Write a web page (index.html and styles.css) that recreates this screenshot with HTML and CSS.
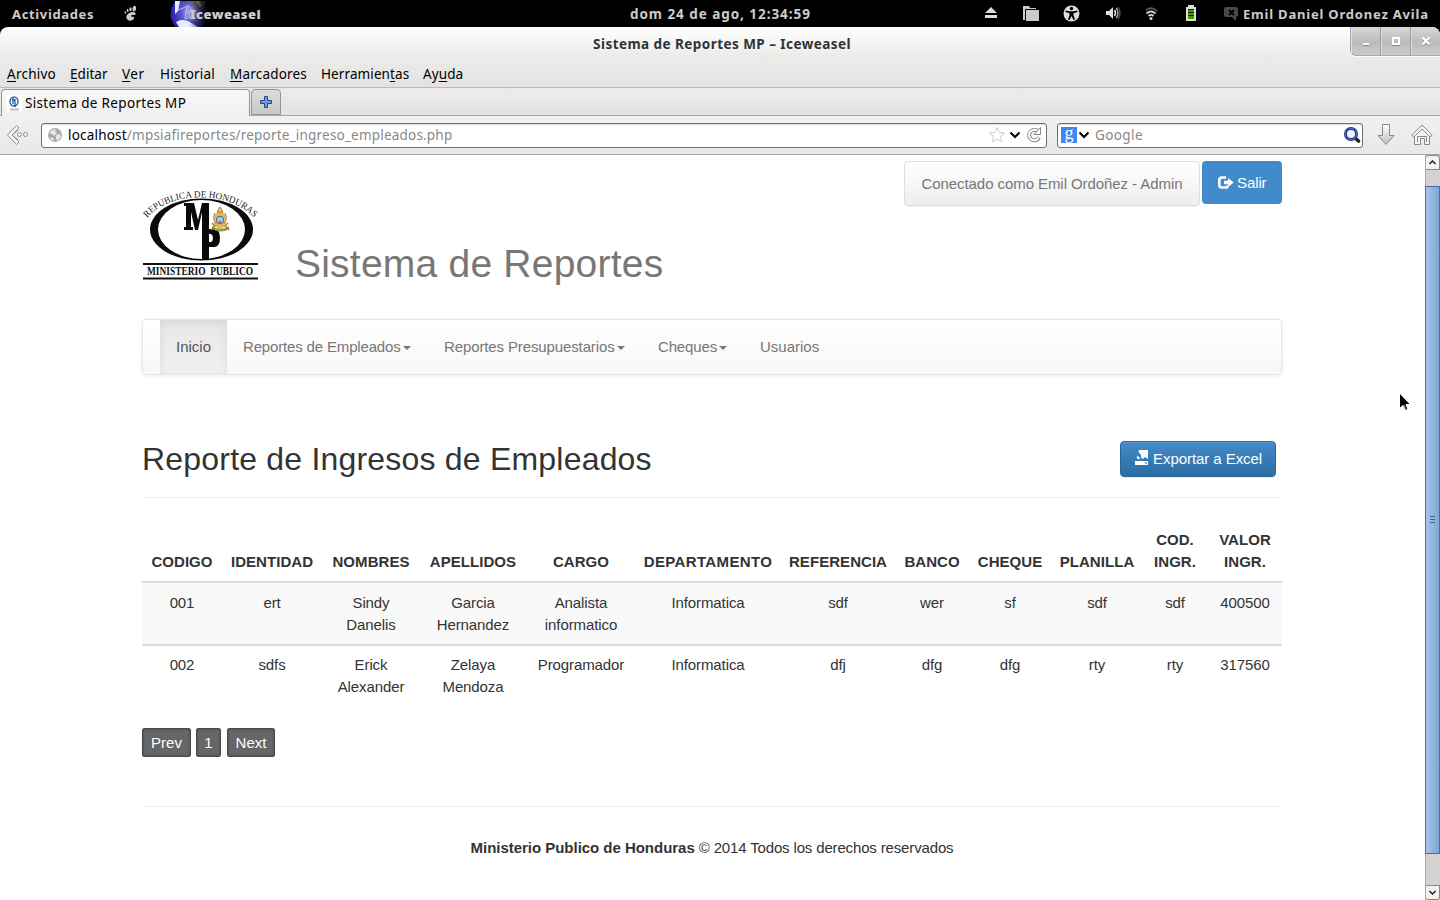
FILE: index.html
```html
<!DOCTYPE html>
<html lang="es">
<head>
<meta charset="utf-8">
<title>Sistema de Reportes MP</title>
<link rel="stylesheet" href="styles.css">
</head>
<body>
<header class="topbar">
  <span class="activities">Actividades</span>
  <svg class="foot" width="16" height="18" viewBox="0 0 16 18" fill="#ccc"><path d="M8.500 7.500c3-1 6 0 5 2-.8 1-3-.2-4.300 1-.8 1 .8 1.500 1.800 1.300 1.300.2 1.500 1.700.3 2.700-2 1.800-5.300 1.500-6.500-.8C3.500 11 5.500 8.500 8.500 7.500z"/><ellipse cx="12.300" cy="3.700" rx="1.800" ry="2.900" transform="rotate(15 12.300 3.700)"/><ellipse cx="8.500" cy="4.200" rx="1.100" ry="2"/><ellipse cx="5.600" cy="5.500" rx=".9" ry="1.600" transform="rotate(-15 5.600 5.500)"/><ellipse cx="3.400" cy="7.500" rx=".8" ry="1.300" transform="rotate(-25 3.400 7.500)"/></svg>
  <span class="app"><svg class="globe" width="38" height="26" viewBox="0 0 38 26"><defs><radialGradient id="gl" cx=".55" cy=".45" r=".6"><stop offset="0" stop-color="#b9bcf5"/><stop offset=".45" stop-color="#5c55cc"/><stop offset="1" stop-color="#1b14a8"/></radialGradient><linearGradient id="fade"><stop offset=".5" stop-color="#000" stop-opacity="0"/><stop offset="1" stop-color="#000"/></linearGradient></defs><circle cx="19" cy="13" r="18.500" fill="url(#gl)"/><path d="M5 0h5L8 10l-3 3zM6 21c8-5 14 0 22 5H9z" fill="#e4ecff"/><path d="M8 9l10-4 12 10M17 5l-2 13 11-5" stroke="#c8ccff" fill="none" stroke-width=".8"/><path d="M20 0h16c0 4-3 6-7 6s-7-2-9-6z" fill="#777"/><path d="M27 0l4 5" stroke="#ccc" stroke-width="2"/><path d="M0 0h38v26H0z" fill="url(#fade)"/></svg><b>Iceweasel</b></span>
  <span class="clock">dom 24 de ago, 12:34:59</span>
  <div class="tray">
    <svg width="16" height="18" viewBox="0 0 16 18" fill="#ddd"><path d="M9 2l6 6H3zM3 10h12v3H3z"/></svg>
    <svg width="18" height="18" viewBox="0 0 18 18"><path d="M1 1h6l1 2h6v3H5v9H1z" fill="#ccc"/><path d="M4 5h13v11H4z" fill="#ccc"/><path d="M3.500 15V4.500h11" stroke="#000" fill="none"/></svg>
    <svg width="18" height="18" viewBox="0 0 18 18"><circle cx="8.500" cy="8.500" r="8" fill="#ddd"/><g transform="translate(-.5 -.5)"><circle cx="9" cy="4" r="1.700"/><path d="M3 6l4 .7h4L15 6v1.500l-4 1.200v2L12.500 15l-1.500.6L9 11.500 7 15.600 5.500 15 7 10.700v-2L3 7.500z"/></g></svg>
    <svg width="18" height="18" viewBox="4 1 18 18" fill="none"><path d="M2 7h3l4-4v12l-4-4H2z" fill="#ddd" transform="translate(3 0)"/><g transform="translate(3 0)"><path d="M10.500 6q2 3 0 6" stroke="#ddd" stroke-width="1.500"/><path d="M12.300 4q3.200 5 0 10" stroke="#aaa" stroke-width="1.400"/><path d="M14.200 3q3.500 6 0 12" stroke="#555" stroke-width="1.400"/></g></svg>
    <svg width="16" height="18" viewBox="3 1 16 18" fill="none" stroke-width="1.700"><path d="M2 7q6-5.500 12 0" stroke="#555"/><path d="M3.500 9.500q4.500-4 9 0" stroke="#ccc"/><path d="M5.500 12q2.500-2.200 5 0" stroke="#ddd"/><circle cx="8" cy="14.500" r="1.500" fill="#ddd"/></svg>
    <svg width="14" height="18" viewBox="2 1 14 18"><path d="M4 1h6v2h2v14H2V3h2z" fill="#ddd"/><path d="M4 5h6v10H4z" fill="#222"/><path d="M4 6h6v2H4zM4 9h6v2H4zM4 12h6v3H4z" fill="#4e9a06"/></svg>
    <svg width="16" height="18" viewBox="0 0 16 18"><path d="M3 2h10q2 0 2 2v6q0 2-2 2v4l-4-4H3q-2 0-2-2V4q0-2 2-2z" fill="#4a4a4a"/><path d="M6 5l5 5M11 5l-5 5" stroke="#000" stroke-width="2"/></svg>
  </div>
  <span class="user">Emil Daniel Ordonez Avila</span>
</header>

<div class="window">
  <div class="titlebar">
    <span class="wintitle">Sistema de Reportes MP – Iceweasel</span>
    <div class="winbtns">
      <span><svg width="10" height="10"><path d="M2 9.500h6" stroke="#888"/><path d="M2 8h6" stroke="#fff" stroke-width="2"/></svg></span>
      <span><svg width="10" height="10"><path d="M1 9.500h8" stroke="#888"/><path d="M2 2h6v6H2z" fill="none" stroke="#fff" stroke-width="2"/></svg></span>
      <span><svg width="10" height="10"><path d="M1.500 3l7 6.500M8.500 3l-7 6.500" stroke="#888" stroke-width="2"/><path d="M1.500 1.500l7 7M8.500 1.500l-7 7" stroke="#fff" stroke-width="2.300"/></svg></span>
    </div>
  </div>
  <nav class="menubar">
    <span class="m1"><u>A</u>rchivo</span><span class="m2"><u>E</u>ditar</span><span class="m3"><u>V</u>er</span><span class="m4">Hi<u>s</u>torial</span><span class="m5"><u>M</u>arcadores</span><span class="m6">Herramien<u>t</u>as</span><span class="m7">Ay<u>u</u>da</span>
  </nav>
  <div class="tabs">
    <div class="tab"><svg width="16" height="16" viewBox="0 0 16 16"><path d="M0 0h16v16H0z" fill="#fff"/><ellipse cx="8" cy="6.500" rx="4" ry="4.500" fill="none" stroke="#2a6ca5" stroke-width="1.500"/><path d="M7 3v6M9 4v8M6 5h3" stroke="#1d5d99" stroke-width="1.300"/><path d="M4 14.500h9" stroke="#bbb" stroke-width="2"/></svg><span class="tabname">Sistema de Reportes MP</span></div>
    <div class="newtab"><svg width="14" height="14" viewBox="0 0 14 14"><path d="M5.500 1.500h3v4h4v3h-4v4h-3v-4h-4v-3h4z" fill="#6f9fd8" stroke="#204a87" stroke-linejoin="round"/></svg></div>
  </div>
  <div class="toolbar">
    <svg class="back" width="24" height="24" viewBox="0 0 24 24" fill="#f8f8f8" stroke="#8d8d8a"><path d="M10.500 2.500l2.500 2.500-7 7 7 7-2.500 2.500L1.500 12z" stroke-linejoin="round"/><path d="M6 12l6-5M6 12l6 5" fill="none"/><circle cx="13.500" cy="11.500" r="2"/><circle cx="19.500" cy="11.500" r="2"/></svg>
    <div class="url">
      <svg width="16" height="16" viewBox="0 0 16 16"><circle cx="8" cy="8" r="7" fill="#aaa"/><path d="M2 6l3-3 4-1-1 3 2 1-3 3-2-2zM9 8l4-1 1 3-3 4-2-2zM3 10l3 1 1 3-3-1z" fill="#e6e6e6"/></svg>
      <span class="addr">localhost<i>/mpsiafireportes/reporte_ingreso_empleados.php</i></span>
      <svg class="urlicons" width="56" height="18" viewBox="0 0 56 18" fill="none"><path d="M9 1.500l2.200 5 5.300.5-4 3.500 1.200 5.500L9 13.200 4.300 16l1.200-5.500-4-3.500 5.300-.5z" stroke="#ccc"/><path d="M22.500 6.500l4.500 4.500 4.500-4.500" stroke="#000" stroke-width="2"/><path d="M49.500 5A5.200 5.200 0 1 0 51 11.500" stroke="#888" stroke-width="4"/><path d="M49.500 5A5.200 5.200 0 1 0 50.600 11.900" stroke="#fff" stroke-width="2"/><path d="M52.500 1.500v7h-6.500l2.500-2.500 1-2z" fill="#fff" stroke="#888"/></svg>
    </div>
    <div class="search">
      <span class="g">g</span>
      <svg width="12" height="10" viewBox="0 0 12 10"><path d="M1.500 2.500L6 7l4.500-4.500" stroke="#000" stroke-width="2" fill="none"/></svg>
      <span class="placeholder">Google</span>
      <svg width="18" height="18" viewBox="0 0 18 18"><path d="M12 12l3.500 3" stroke="#222" stroke-width="3.600" stroke-linecap="round"/><circle cx="8" cy="8" r="5.500" fill="#f0f5ff" stroke="#20327f" stroke-width="3"/><circle cx="8" cy="8" r="5.500" fill="none" stroke="#6279c5"/></svg>
    </div>
    <svg class="dl" width="20" height="24" viewBox="0 0 20 24"><defs><linearGradient id="dg" x2="0" y2="1"><stop offset="0" stop-color="#fff"/><stop offset="1" stop-color="#b8c0c6"/></linearGradient></defs><path d="M6.500 1.500h7v11h4.500L10 21.500 2 12.500h4.500z" fill="url(#dg)" stroke="#888a85" stroke-linejoin="round"/></svg>
    <svg class="home" width="22" height="24" viewBox="0 0 22 24" fill="#f4f4f4" stroke="#888a85"><path d="M3.500 12v9.500h6v-6h4v6h5V12L11 5z"/><path d="M6.500 19v-5.500h9V19" fill="none"/><path d="M11 2L.8 12l2 2L11 6l8.200 8 2-2z" stroke-linejoin="round"/></svg>
  </div>

  <div class="viewport">
    <main class="page">
      <div class="head">
        <svg class="logo" width="118" height="96" viewBox="0 0 118 96">
          <defs><path id="arc" d="M5 34C28 6 90 6 114 36"/></defs>
          <text class="arctext" textLength="118" lengthAdjust="spacingAndGlyphs"><textPath href="#arc">REPUBLICA DE HONDURAS</textPath></text>
          <path fill-rule="evenodd" d="M8 45.500a51.500 31 0 1 0 103 0a51.500 31 0 1 0-103 0zM16 45.500a43.500 29.500 0 1 1 87 0a43.500 29.500 0 1 1-87 0z" fill="#0a0a0a"/>
          <path fill-rule="evenodd" d="M42 19h10l4 17 4-17h7v26h6q5 1 5 9t-5 9h-6v13h-7V28l-4 18h-3l-4-18v15h2v3h-9v-3h2V22h-2zM67 50v8h2q2-1 2-4t-2-4z" fill="#090909"/>
          <g><ellipse cx="78" cy="36" rx="6" ry="9" fill="#ddb85b"/><path d="M70 42q8 6 17 0v3q-8 5-17 0z" fill="#86a43c"/><path d="M75 28l3-5 3 5zM73 29q-3 6 1 11M83 29q3 6-1 11" fill="#e7cf82" stroke="#a77e3a"/><circle cx="78" cy="36" r="3.700" fill="#a8cbea" stroke="#4466a1"/><path d="M70 39l3 3-4 4M86 39l-3 3 4 4" fill="none" stroke="#b07a33" stroke-width="1.500"/><circle cx="78" cy="38" r="1.300" fill="#d35d43"/></g>
          <path d="M1 80h115M1 94.500h115" stroke="#111" stroke-width="1.800"/>
          <text class="logotext" x="5" y="91.300" textLength="106" lengthAdjust="spacingAndGlyphs" xml:space="preserve">MINISTERIO  PUBLICO</text>
        </svg>
        <h1>Sistema de Reportes</h1>
        <div class="session">
          <span class="who">Conectado como Emil Ordoñez - Admin</span>
          <a class="exit"><svg width="16" height="14" viewBox="0 0 16 14"><path d="M8 1.500H4Q1.300 1.500 1.300 4v5q0 2.500 2.700 2.500h4.500q1 0 1-1V9.500" stroke="#fff" stroke-width="2.600" fill="none"/><path d="M10 2l5.700 4.500L10 11V8.300H6V4.700h4z" fill="#fff"/></svg><span>Salir</span></a>
        </div>
      </div>
      <nav class="navbar">
        <a class="active">Inicio</a><a class="n2">Reportes de Empleados<em></em></a><a class="n3">Reportes Presupuestarios<em></em></a><a class="n4">Cheques<em></em></a><a>Usuarios</a>
      </nav>
      <div class="heading">
        <h2>Reporte de Ingresos de Empleados</h2>
        <a class="export"><svg width="14" height="16" viewBox="0 0 14 16" fill="#fff"><path d="M4 0h9v9l-3-2-2 2-2-1.500V5L3.500 2zM2.500 5.500L5 8 4 9.500 1.500 8zM0 11h13v4H0z"/><path d="M10 13h2" stroke="#3071a9"/></svg><span>Exportar a Excel</span></a>
      </div>
      <table>
        <colgroup><col class="c1"><col class="c2"><col class="c3"><col class="c4"><col class="c5"><col class="c6"><col class="c7"><col class="c8"><col class="c9"><col class="c10"><col class="c11"><col class="c12"></colgroup>
        <thead><tr><th>CODIGO</th><th>IDENTIDAD</th><th>NOMBRES</th><th>APELLIDOS</th><th>CARGO</th><th class="wide">DEPARTAMENTO</th><th>REFERENCIA</th><th>BANCO</th><th>CHEQUE</th><th>PLANILLA</th><th>COD.<br>INGR.</th><th>VALOR<br>INGR.</th></tr></thead>
        <tbody>
          <tr class="odd"><td>001</td><td>ert</td><td>Sindy<br>Danelis</td><td>Garcia<br>Hernandez</td><td>Analista<br>informatico</td><td>Informatica</td><td>sdf</td><td>wer</td><td>sf</td><td>sdf</td><td>sdf</td><td>400500</td></tr>
          <tr><td>002</td><td>sdfs</td><td>Erick<br>Alexander</td><td>Zelaya<br>Mendoza</td><td>Programador</td><td>Informatica</td><td>dfj</td><td>dfg</td><td>dfg</td><td>rty</td><td>rty</td><td>317560</td></tr>
        </tbody>
      </table>
      <div class="pager"><a class="prev">Prev</a><a class="one">1</a><a class="next">Next</a></div>
      <footer><b>Ministerio Publico de Honduras</b> © 2014 Todos los derechos reservados</footer>
    </main>
    <div class="scroll">
      <span class="arrow"><svg width="9" height="7"><path d="M1.500 5l3-3 3 3" stroke="#222" stroke-width="1.500" fill="none"/></svg></span>
      <span class="thumb"><svg width="6" height="8"><path d="M0 .5h5M0 3.500h5M0 6.500h5" stroke="#3f6293"/></svg></span>
      <span class="arrow down"><svg width="9" height="7"><path d="M1.500 2l3 3 3-3" stroke="#222" stroke-width="1.500" fill="none"/></svg></span>
    </div>
  </div>
</div>
<svg class="cursor" width="14" height="20" viewBox="0 0 14 20"><path d="M1.500 1v15.500l3.500-3 2 5 3-1.300-2-4.700h4.500z" fill="#000" stroke="#fff"/><path d="M6.500 13l2 4.500-1.300.5L5.200 13.300z" fill="#999"/></svg>
</body>
</html>
```
FILE: styles.css
```css
* { box-sizing: border-box; }
body { margin: 0; width: 1440px; height: 900px; overflow: hidden; background: #000; position: relative; font: 15px/22px "Liberation Sans", sans-serif; color: #333; }
svg { display: block; flex: none; }
span, a { white-space: nowrap; }

.topbar { height: 27px; display: flex; align-items: center; font: bold 13px/27px "Noto Sans", sans-serif; color: #ccc; position: relative; }
.activities { width: 111px; padding-left: 12px; letter-spacing: .65px; line-height: 28px; }
.foot { margin-left: 11px; }
.app { margin-left: 32px; width: 92px; height: 26px; position: relative; }
.globe { position: absolute; left: 0; top: 0; }
.app b { position: absolute; left: 20px; top: 0; line-height: 27px; letter-spacing: .4px; }
.clock { margin-left: 368px; width: 182px; font-size: 13.5px; letter-spacing: .95px; line-height: 28px; }
.tray { margin-left: 170px; width: 257px; display: flex; justify-content: space-between; align-items: center; }
.user { margin-left: 4px; letter-spacing: .8px; line-height: 28px; }

.window { height: 873px; display: flex; flex-direction: column; border-radius: 8px 8px 0 0; overflow: hidden; background: linear-gradient(#fff, #ecebea 30px, #e3e2e0 61px, #edecea 62px, #e3e2e0 88px); }
.titlebar { height: 33px; position: relative; }
.wintitle { display: block; width: 1444px; text-align: center; font: bold 13.5px/35px "Noto Sans", sans-serif; letter-spacing: .45px; color: #2e3436; }
.winbtns { position: absolute; right: 0; top: 0; width: 90px; height: 29px; display: flex; border: 1px solid #aaa; border-top: 0; border-right: 0; border-radius: 0 0 0 6px; background: linear-gradient(#d8d8d8, #bbb 55%, #ccc); box-shadow: 0 1px #fff; }
.winbtns span { flex: 1; display: flex; align-items: center; justify-content: center; border-right: 1px solid #999; box-shadow: inset 1px 0 #ddd; }
.winbtns span:last-child { border: 0; }
.menubar { height: 28px; display: flex; padding-left: 7px; border-bottom: 1px solid #bcbbb9; font: 13.5px/28px "Noto Sans", sans-serif; color: #000; }
.menubar u { text-underline-offset: 2px; text-decoration-thickness: 1px; }
.m1 { width: 63px; letter-spacing: .25px; } .m2 { width: 52px; letter-spacing: .05px; } .m3 { width: 38px; letter-spacing: .5px; } .m4 { width: 70px; letter-spacing: .2px; } .m5 { width: 91px; letter-spacing: .2px; } .m6 { width: 102px; letter-spacing: .1px; } .m7 { letter-spacing: .1px; }
.tabs { height: 28px; display: flex; border-bottom: 1px solid #a8a7a5; padding-top: 1px; }
.tab { width: 249px; height: 27px; margin-left: 1px; border: 1px solid #979694; border-bottom: 0; border-radius: 4px 4px 0 0; background: linear-gradient(#f8f8f7, #f0efee); display: flex; align-items: center; padding-left: 4px; font: 13.5px/27px "Noto Sans", sans-serif; color: #000; }
.tabname { margin-left: 3px; letter-spacing: .33px; }
.newtab { margin-left: 1px; width: 30px; height: 26px; border: 1px solid #979694; border-radius: 4px 4px 0 0; background: linear-gradient(#dddcda, #c9c8c6); display: flex; align-items: center; justify-content: center; }
.toolbar { height: 39px; display: flex; align-items: center; background: linear-gradient(#f2f1f0, #e9e8e6); border-bottom: 1px solid #aaa6a3; padding-left: 6px; }
.url, .search { height: 25px; border: 1px solid #6f706c; border-radius: 3px; background: #fff; box-shadow: inset 0 1px #ddd; display: flex; align-items: center; font: 13.5px/25px "Noto Sans", sans-serif; color: #000; }
.url { margin-left: 11px; width: 1006px; padding-left: 5px; }
.addr { margin-left: 5px; flex: 1; letter-spacing: .2px; padding-top: 1px; }
.addr i { font-style: normal; color: #888; }
.urlicons { margin-right: 2px; }
.search { margin-left: 10px; width: 306px; padding: 0 1px 0 3px; }
.g { width: 16px; height: 16px; background: #4285f4; color: #fff; font: 18px/12px "Liberation Serif", serif; text-align: center; margin-right: 1px; }
.placeholder { color: #888; flex: 1; margin-left: 5px; letter-spacing: .4px; padding-top: 1px; }
.dl { margin-left: 13px; }
.home { margin-left: 15px; }

.viewport { flex: 1; display: flex; background: #fff; min-height: 0; }
.page { width: 1140px; margin-left: 142px; }
.head { height: 164px; display: flex; align-items: flex-start; }
.logo { margin-top: 29px; overflow: visible; }
.arctext { font: 9.5px "Liberation Serif", serif; fill: #222; }
.logotext { font: bold 12px "Liberation Serif", serif; fill: #111; }
h1 { margin: 87px 0 0 35px; font-size: 39px; line-height: 44px; font-weight: 400; color: #777; letter-spacing: .22px; white-space: nowrap; }
.session { margin: 6px 0 0 auto; display: flex; align-items: flex-start; }
.who { width: 296px; height: 45px; border: 1px solid #ddd; border-radius: 4px; background: linear-gradient(#fff, #eee); text-align: center; line-height: 43px; color: #777; letter-spacing: -.07px; box-shadow: 0 1px #f1f1f1; }
.exit { margin-left: 2px; width: 80px; height: 43px; border-radius: 4px; background: #428bca; color: #fff; display: flex; align-items: center; padding-left: 16px; gap: 3px; letter-spacing: -.1px; }
.navbar { height: 56px; border: 1px solid #e7e7e7; border-radius: 4px; background: linear-gradient(#fff, #f7f7f7); box-shadow: 0 1px 5px rgba(0,0,0,.075); padding-left: 17px; display: flex; color: #777; line-height: 53px; }
.navbar a { padding: 0 16px; display: flex; align-items: flex-start; }
.navbar .active { width: 67px; background: linear-gradient(#e7e7e7, #f0f0f0); box-shadow: inset 0 3px 9px rgba(0,0,0,.075); color: #555; }
.navbar .n2 { width: 201px; letter-spacing: -.16px; } .navbar .n3 { width: 214px; letter-spacing: -.12px; } .navbar .n4 { width: 102px; letter-spacing: -.15px; }
.navbar em { border: 4px solid transparent; border-top-color: #777; border-bottom: 0; margin: 26px 0 0 2px; }
.heading { height: 123px; border-bottom: 1px solid #eee; display: flex; justify-content: space-between; padding: 66px 6px 0 0; }
h2 { margin: 0; font-size: 32px; line-height: 36px; font-weight: 400; letter-spacing: .2px; white-space: nowrap; }
.export { width: 156px; height: 36px; border: 1px solid #2b669a; border-radius: 4px; background: linear-gradient(#428bca, #2d6ca2); box-shadow: inset 0 1px rgba(255,255,255,.15), 0 1px 1px rgba(0,0,0,.075); color: #fff; display: flex; align-items: center; padding-left: 14px; gap: 4px; letter-spacing: -.06px; }
.export svg { margin-top: -2px; }
table { width: 1140px; margin-top: 22px; border-collapse: separate; border-spacing: 0; table-layout: fixed; text-align: center; }
.c1 { width: 80px; } .c2 { width: 100px; } .c3 { width: 98px; } .c4 { width: 106px; } .c5 { width: 110px; } .c6 { width: 144px; } .c7 { width: 116px; } .c8 { width: 72px; } .c9 { width: 84px; } .c10 { width: 90px; } .c11 { width: 66px; } .c12 { width: 74px; }
th { padding: 9px 0 8px; vertical-align: bottom; border-bottom: 2px solid #ddd; height: 63px; letter-spacing: .05px; }
.wide { letter-spacing: .35px; }
td { padding: 8px 0; height: 62px; vertical-align: top; letter-spacing: -.1px; }
.odd td { background: #f9f9f9; height: 63px; border-bottom: 2px solid #ddd; padding-top: 9px; }
.pager { margin-top: 20px; display: flex; color: #fff; text-align: center; line-height: 29px; }
.pager a { height: 29px; background: #666; border-radius: 3px; box-shadow: inset 0 0 3px rgba(0,0,0,.8); }
.prev { width: 49px; } .one { width: 25px; margin: 0 6px 0 5px; } .next { width: 48px; }
footer { margin-top: 49px; border-top: 1px solid #eee; padding-top: 30px; text-align: center; letter-spacing: -.15px; }
footer b { letter-spacing: -.03px; }

.scroll { margin-left: 143px; width: 15px; background: #d3d2d0; display: flex; flex-direction: column; border-left: 1px solid #aaa; }
.arrow { height: 15px; border: 1px solid #888; border-left: 0; border-radius: 3px 3px 0 0; background: #f2f2f1; display: flex; align-items: center; justify-content: center; }
.down { margin-top: auto; border-radius: 0 0 3px 3px; }
.thumb { margin: 16px 0 0 -1px; height: 668px; border: 1px solid #4a6fa5; background: linear-gradient(90deg, #a9c4ec, #7fa6d9); display: flex; align-items: center; justify-content: center; }
.cursor { position: absolute; left: 1398px; top: 392px; }
```
